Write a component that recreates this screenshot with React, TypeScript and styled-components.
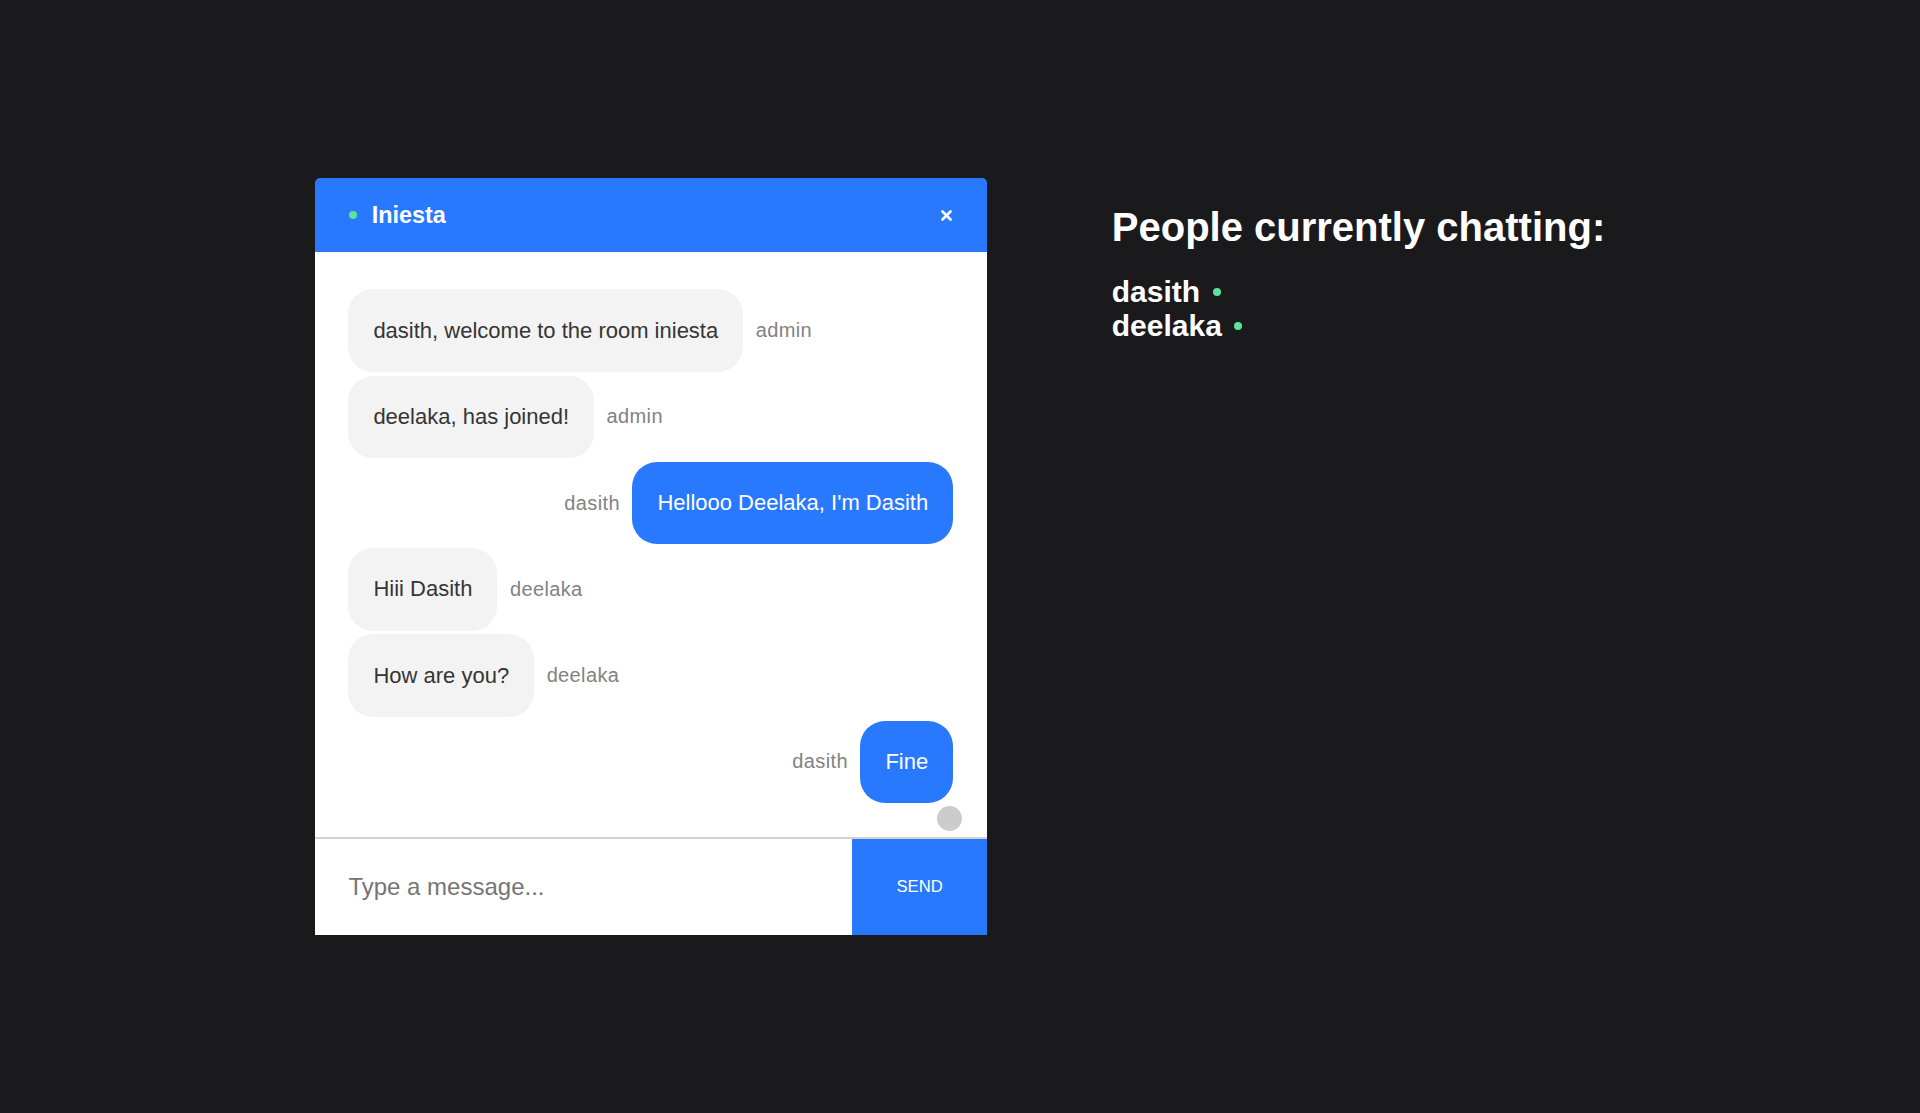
import styled, { createGlobalStyle } from "styled-components";

const GlobalStyle = createGlobalStyle`
    html, body {
        margin: 0;
        padding: 0;
        background: #1A1A1D;
        font-family: "Liberation Sans", Arial, Helvetica, sans-serif;
    }
`

const Outer = styled.div`
    display: flex;
    justify-content: center;
    align-items: center;
    height: 100vh;
    background-color: #1A1A1D;
`

const ChatBox = styled.div`
    display: flex;
    flex-direction: column;
    width: 672px;
    height: 757px;
    background: #FFFFFF;
    border-radius: 10px;
`

const InfoBar = styled.div`
    display: flex;
    align-items: center;
    justify-content: space-between;
    flex: 0 0 74px;
    background: #2979FF;
    border-radius: 5px 5px 0 0;
    padding: 0 34px;
`

const InfoLeft = styled.div`
    display: flex;
    align-items: center;
    color: #FFFFFF;
`

const Dot = styled.span<{ $gap?: string }>`
    display: inline-block;
    width: 8px;
    height: 8px;
    border-radius: 50%;
    background: #5BE39C;
    margin: ${p => p.$gap || "0"};
`

const RoomName = styled.h3`
    margin: 0;
    font-size: 23.4px;
    font-weight: 700;
`

const CloseBtn = styled.a`
    display: flex;
    align-items: center;
    margin-right: 1px;
    cursor: pointer;
`

const Messages = styled.div`
    position: relative;
    flex: 1;
    padding: 33.6px 0;
    overflow: hidden;
`

const Row = styled.div<{ $mine: boolean }>`
    display: flex;
    justify-content: ${p => (p.$mine ? "flex-end" : "flex-start")};
    padding: 0 33.6px;
    margin-top: 3.75px;
`

const Bubble = styled.div<{ $mine: boolean }>`
    display: inline-block;
    max-width: 80%;
    padding: 6.25px 25px;
    border-radius: 25px;
    background: ${p => (p.$mine ? "#2979FF" : "#F3F3F3")};
`

const BubbleText = styled.p<{ $mine: boolean }>`
    margin: 22px 0;
    font-size: 22px;
    line-height: 26px;
    letter-spacing: 0;
    word-wrap: break-word;
    color: ${p => (p.$mine ? "#FFFFFF" : "#353535")};
`

const Sender = styled.p<{ $mine: boolean }>`
    display: flex;
    align-items: center;
    margin: 20px 0;
    font-size: 20px;
    color: #828282;
    letter-spacing: 0.375px;
    padding: ${p => (p.$mine ? "0 12.5px 0 0" : "0 0 0 12.5px")};
`

const ScrollBtn = styled.button`
    position: absolute;
    right: 25px;
    bottom: 6px;
    width: 25px;
    height: 25px;
    border: 0;
    border-radius: 50%;
    background: rgba(0, 0, 0, 0.2);
    cursor: pointer;
`

const Form = styled.form`
    display: flex;
    border-top: 2px solid #D3D3D3;
`

const Input = styled.input`
    width: 80%;
    border: none;
    border-radius: 0;
    padding: 34px 33.6px;
    font-size: 24px;
    font-family: "Liberation Sans", Arial, sans-serif;
    color: #353535;
    background: #FFFFFF;
    box-sizing: border-box;

    &::placeholder {
        color: #757575;
    }

    &:focus {
        outline: none;
    }
`

const SendBtn = styled.button`
    width: 20%;
    border: none;
    border-radius: 0;
    background: #2979FF;
    color: #FFFFFF;
    text-transform: uppercase;
    font-size: 16.67px;
    font-family: "Liberation Sans", Arial, sans-serif;
    padding: 25px;
    cursor: pointer;
`

const TextContainer = styled.div`
    display: flex;
    flex-direction: column;
    justify-content: space-between;
    height: 757px;
    margin-left: 125px;
    color: #FFFFFF;
`

const Heading = styled.h1`
    margin: 26.8px 0 0;
    font-size: 40px;
    font-weight: 700;
`

const ActiveList = styled.h2`
    margin: 24.9px 0;
    font-size: 30px;
    font-weight: 700;
`

const ActiveItem = styled.div`
    display: flex;
    align-items: center;
`

type Msg = { user: string; text: string };

const me = "dasith";

const messages: Msg[] = [
    { user: "admin", text: "dasith, welcome to the room iniesta" },
    { user: "admin", text: "deelaka, has joined!" },
    { user: "dasith", text: "Hellooo Deelaka, I'm Dasith" },
    { user: "deelaka", text: "Hiii Dasith" },
    { user: "deelaka", text: "How are you?" },
    { user: "dasith", text: "Fine" },
];

const users = ["dasith", "deelaka"];

function Message({ msg }: { msg: Msg }) {
    const mine = msg.user === me;
    return (
        <Row $mine={mine}>
            {mine && <Sender $mine>{msg.user}</Sender>}
            <Bubble $mine={mine}>
                <BubbleText $mine={mine}>{msg.text}</BubbleText>
            </Bubble>
            {!mine && <Sender $mine={false}>{msg.user}</Sender>}
        </Row>
    );
}

export default function App() {
    return (
        <>
            <GlobalStyle />
            <Outer>
                <ChatBox>
                    <InfoBar>
                        <InfoLeft>
                            <Dot $gap="0 15px 0 0" />
                            <RoomName>Iniesta</RoomName>
                        </InfoLeft>
                        <CloseBtn>
                            <svg width="11" height="11" viewBox="0 0 11 11">
                                <path d="M1.5 1.5 L9.5 9.5 M9.5 1.5 L1.5 9.5" stroke="#fff" strokeWidth="2.6" strokeLinecap="round" />
                            </svg>
                        </CloseBtn>
                    </InfoBar>
                    <Messages>
                        {messages.map((m, i) => (
                            <Message key={i} msg={m} />
                        ))}
                        <ScrollBtn aria-label="scroll to bottom" />
                    </Messages>
                    <Form onSubmit={e => e.preventDefault()}>
                        <Input type="text" placeholder="Type a message..." />
                        <SendBtn type="submit">Send</SendBtn>
                    </Form>
                </ChatBox>
                <TextContainer>
                    <div>
                        <Heading>People currently chatting:</Heading>
                        <ActiveList>
                            {users.map(name => (
                                <ActiveItem key={name}>
                                    {name}
                                    <Dot $gap="0 0 0 12.5px" />
                                </ActiveItem>
                            ))}
                        </ActiveList>
                    </div>
                </TextContainer>
            </Outer>
        </>
    );
}
